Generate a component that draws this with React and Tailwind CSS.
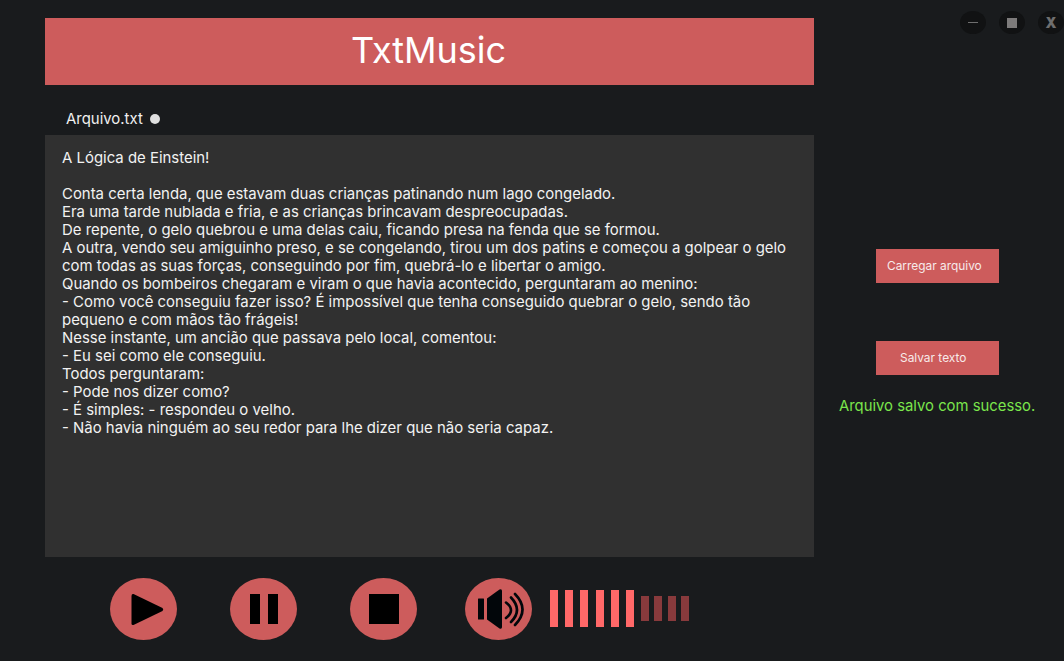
const lines = [
  "A Lógica de Einstein!",
  "\u00a0",
  "Conta certa lenda, que estavam duas crianças patinando num lago congelado.",
  "Era uma tarde nublada e fria, e as crianças brincavam despreocupadas.",
  "De repente, o gelo quebrou e uma delas caiu, ficando presa na fenda que se formou.",
  "A outra, vendo seu amiguinho preso, e se congelando, tirou um dos patins e começou a golpear o gelo com todas as suas forças, conseguindo por fim, quebrá-lo e libertar o amigo.",
  "Quando os bombeiros chegaram e viram o que havia acontecido, perguntaram ao menino:",
  "- Como você conseguiu fazer isso? É impossível que tenha conseguido quebrar o gelo, sendo tão pequeno e com mãos tão frágeis!",
  "Nesse instante, um ancião que passava pelo local, comentou:",
  "- Eu sei como ele conseguiu.",
  "Todos perguntaram:",
  "- Pode nos dizer como?",
  "- É simples: - respondeu o velho.",
  "- Não havia ninguém ao seu redor para lhe dizer que não seria capaz.",
];

function Round({ children, className = "" }) {
  return (
    <div className={"w-[67px] h-[62px] rounded-[50%] bg-[#cd5c5c] flex items-center justify-center shrink-0 " + className}>
      {children}
    </div>
  );
}

function WinBtn({ children }) {
  return <div className="w-[26px] h-[23px] rounded-[50%] bg-[#111213] flex items-center justify-center">{children}</div>;
}

export default function App() {
  return (
    <div className="w-[1064px] h-[661px] overflow-hidden bg-[#191b1d] flex font-['Inter',sans-serif]">
      <div className="w-[769px] ml-[45px] pt-[18px] flex flex-col shrink-0">
        <div className="h-[67px] bg-[#cd5c5c] text-white text-[36px] flex items-center justify-center pb-[3px] pr-[2px]">TxtMusic</div>
        <div className="h-[50px] pl-[21px] pt-[17px] flex items-center gap-[7px] text-[14.93px] leading-[18px] text-[#f0f0f0]">
          <span>Arquivo.txt</span>
          <span className="w-[10px] h-[10px] rounded-full bg-[#e0e0e0]"></span>
        </div>
        <div className="h-[422px] bg-[#303030] pl-[17px] pr-[16px] pt-[14px] text-[14.93px] leading-[18px] text-[#f2f2f2]">
          {lines.map((l, i) => <div key={i}>{l}</div>)}
        </div>
        <div className="flex items-center pl-[65px] pt-[21px]">
          <Round className="pl-[7px]">
            <svg width="33" height="33" viewBox="0 0 33 33"><path d="M2.5 1 L31.5 15 Q33 16.5 31.5 18 L2.5 32 Q0.5 32.5 0.5 30.5 L0.5 3 Q0.5 0.5 2.5 1 Z" fill="#000" /></svg>
          </Round>
          <Round className="ml-[53px] gap-[8px]">
            <div className="w-[10px] h-[30px] bg-black"></div>
            <div className="w-[10px] h-[30px] bg-black"></div>
          </Round>
          <Round className="ml-[53px]">
            <div className="w-[30px] h-[30px] bg-black"></div>
          </Round>
          <Round className="ml-[48px] pl-[5px]">
            <svg width="46" height="40" viewBox="0 0 46 40" fill="none">
              <rect x="0" y="9.5" width="6" height="21" rx="0.5" fill="#02060a" />
              <path d="M9 9.5 L21.5 0.5 Q24 -0.5 24 2 L24 38 Q24 40.5 21.5 39.5 L9 30.5 Z" fill="#02060a" />
              <path d="M28 13.5 Q38 21 28 29" stroke="#02060a" strokeWidth="2.6" strokeLinecap="round" />
              <path d="M33 8.5 Q45 21 33 33" stroke="#02060a" strokeWidth="2.6" strokeLinecap="round" />
              <path d="M37 5 Q52 20.5 37 36" stroke="#02060a" strokeWidth="2.6" strokeLinecap="round" />
            </svg>
          </Round>
          <div className="ml-[18px] -mt-px flex items-center">
            <div className="flex gap-[7.2px]">
              {[0, 1, 2, 3, 4, 5].map((i) => <div key={i} className="w-[8px] h-[37px] bg-[#ff6868]"></div>)}
            </div>
            <div className="ml-[7px] flex gap-[5.4px]">
              {[0, 1, 2, 3].map((i) => <div key={i} className="w-[8px] h-[25px] bg-[#883a3c]"></div>)}
            </div>
          </div>
        </div>
      </div>
      <div className="flex-1 flex flex-col">
        <div className="h-[249px] pt-[11px] flex justify-end gap-[13px]">
          <WinBtn><div className="w-[10px] h-px bg-[#6e6e6e]"></div></WinBtn>
          <WinBtn><div className="w-[10px] h-[10px] bg-[#7d7b7b]"></div></WinBtn>
          <WinBtn><span className="font-black text-[14px] leading-none text-[#6e6e6e]">X</span></WinBtn>
        </div>
        <div className="ml-[62px] w-[123px] h-[34px] bg-[#cd5c5c] text-[#f7eaea] text-[11.9px] leading-[34px] pl-[11px]">Carregar arquivo</div>
        <div className="ml-[62px] mt-[58px] w-[123px] h-[34px] bg-[#cd5c5c] text-[#f7eaea] text-[11.9px] leading-[34px] pl-[24px]">Salvar texto</div>
        <div className="ml-[25px] mt-[22px] text-[14.85px] leading-[18px] text-[#7be64c] whitespace-nowrap">Arquivo salvo com sucesso.</div>
      </div>
    </div>
  );
}
